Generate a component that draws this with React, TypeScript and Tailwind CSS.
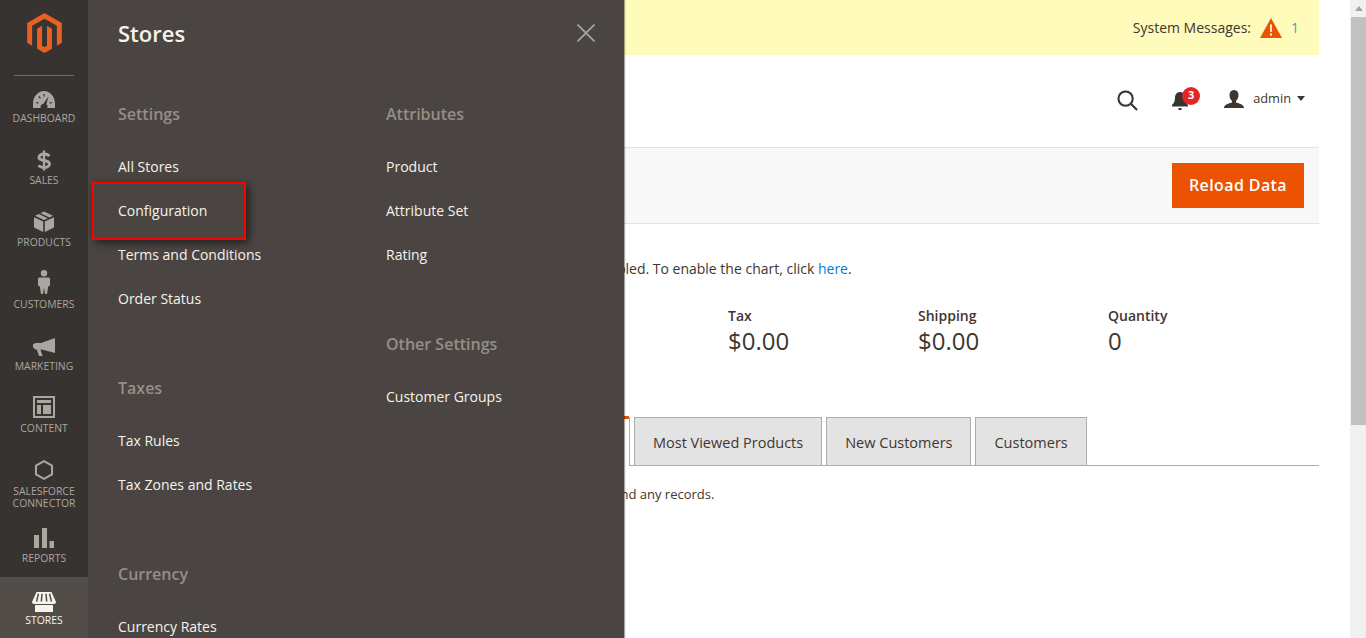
import type { ReactNode } from "react";

const navItems: { label: ReactNode; icon: ReactNode; tall?: boolean; active?: boolean }[] = [
  {
    label: "Dashboard",
    icon: (
      <svg width="22" height="17" viewBox="0 0 22 17" fill="#aaa6a0">
        <path d="M0 17V12.5C0 5.6 4.9 0 11 0s11 5.6 11 12.5V17H14.2c.9-1.6.3-3-.9-3.5L15.500 5.500 10.500 12.800C8.600 13 7 15 7.800 17H0z" />
        <path d="M3 11.500l2.400.7M5.800 5.500l1.600 1.800M11 3v2.400M19 11.500l-2.400.7" stroke="#373330" strokeWidth="1.300" />
      </svg>
    ),
  },
  {
    label: "Sales",
    icon: (
      <svg width="14" height="21" viewBox="0 0 14 21" fill="none" stroke="#aaa6a0" className="mb-[-1px]">
        <path strokeWidth="3" d="M12.500 6C11 4.500 9 4 7 4 4 4 2 5.500 2 7.500 2 12 12.500 9 12.500 14 12.500 16 10 17.500 7 17.500 5 17.500 3 17 1.500 15.500" />
        <path strokeWidth="2.400" d="M7 .5v20" />
      </svg>
    ),
  },
  {
    label: "Products",
    icon: (
      <svg width="20" height="21" viewBox="0 0 20 21" fill="#aaa6a0">
        <path d="M0 6.200 9.200 10.400V21L0 16.500z" />
        <path d="M20 6.200 10.800 10.400V21L20 16.500z" />
        <path d="M1 4.800 4.800 3 13.800 7.300 10 9.100z" />
        <path d="M6.500 2.200 10 .5 19 4.800 15.500 6.500z" />
      </svg>
    ),
  },
  {
    label: "Customers",
    icon: (
      <svg width="12" height="24" viewBox="0 0 12 24" fill="#aaa6a0">
        <circle cx="6" cy="3.300" r="3.200" />
        <path d="M1.500 7.500h9c.9 0 1.500.6 1.500 1.500v6.500l-1.800 1L9 24H7l-1-6.500L5 24H3l-1.200-7.500L0 15.500V9c0-.9.600-1.500 1.500-1.500z" />
      </svg>
    ),
  },
  {
    label: "Marketing",
    icon: (
      <svg width="22" height="18" viewBox="0 0 22 18" fill="#aaa6a0">
        <path d="M22 0v15L9 11.500H7.500L9.500 18H6L3.800 11.500H2.500L0 9.500V6.500L2.500 5H8z" />
      </svg>
    ),
  },
  {
    label: "Content",
    icon: (
      <svg width="22" height="22" viewBox="0 0 22 22" fill="#aaa6a0">
        <path fillRule="evenodd" d="M0 0h22v22H0zM2 2v18h18V2z" />
        <path d="M4 4h14v3H4zM4 9h4v9H4zM10 9h8v9h-8z" />
      </svg>
    ),
  },
  {
    label: (
      <>
        Salesforce
        <br />
        Connector
      </>
    ),
    tall: true,
    icon: (
      <svg width="18" height="20" viewBox="0 0 18 20" fill="none" stroke="#aaa6a0" strokeWidth="2">
        <path d="M9 1.200 17 5.600V14.400L9 18.800 1 14.400V5.600z" />
      </svg>
    ),
  },
  {
    label: "Reports",
    icon: (
      <svg width="20" height="20" viewBox="0 0 20 20" fill="#aaa6a0">
        <path d="M0 7h5v13H0zM8 0h5v20H8zM15.500 13H20v7h-4.500z" />
      </svg>
    ),
  },
  {
    label: "Stores",
    active: true,
    icon: (
      <svg width="24" height="20" viewBox="0 0 24 20" fill="#f7f3eb" className="mb-[-2px]">
        <path d="M4.500 0h15L24 10c0 1.200-1 2-2 2H2c-1 0-2-.8-2-2z" />
        <path d="M3 13h18v7H3z" />
        <path d="M6.500 1.800 4.500 9.500M10 1.800 9.300 9.500M14 1.800 14.700 9.500M17.500 1.800 19.500 9.500" stroke="#524d49" strokeWidth="1.500" />
      </svg>
    ),
  },
];

const menuColumns = [
  [
    { title: "Settings", links: ["All Stores", "Configuration", "Terms and Conditions", "Order Status"] },
    { title: "Taxes", links: ["Tax Rules", "Tax Zones and Rates"] },
    { title: "Currency", links: ["Currency Rates"] },
  ],
  [
    { title: "Attributes", links: ["Product", "Attribute Set", "Rating"] },
    { title: "Other Settings", links: ["Customer Groups"] },
  ],
];

const totals = [
  { label: "Revenue", value: "$0.00" },
  { label: "Tax", value: "$0.00" },
  { label: "Shipping", value: "$0.00" },
  { label: "Quantity", value: "0" },
];

function Sidebar() {
  return (
    <aside className="w-[88px] shrink-0 bg-[#373330]">
      <div className="relative h-[75px]">
        <svg width="35" height="40" viewBox="1.600 0 20.800 24" fill="#eb5f21" className="absolute left-[27px] top-[13px]">
          <path d="M12 24l-4.455-2.572v-12l2.97-1.715v12.001L12 20.57l1.485-.856V7.714l2.97 1.715v12L12 24zM22.391 6v12l-2.969 1.714V7.714L12 3.43 4.574 7.714v12L1.609 18V6L12 0l10.391 6z" />
        </svg>
        <div className="absolute -bottom-px left-[14px] h-px w-[60px] bg-[#736e6a]" />
      </div>
      {navItems.map((item, i) => (
        <div
          key={i}
          className={`flex flex-col items-center ${item.tall ? "h-[68px]" : "h-[62px]"} ${item.active ? "bg-[#524d49] text-[#f7f3eb]" : "text-[#aaa6a0]"}`}
        >
          <div className="flex h-[33px] items-end justify-center">{item.icon}</div>
          <div className={`${item.tall ? "mt-[5px]" : "mt-[4px]"} text-center text-[10.400px] leading-[12px] uppercase`}>{item.label}</div>
        </div>
      ))}
    </aside>
  );
}

function StoresPanel() {
  return (
    <div className="absolute top-0 bottom-0 left-[88px] w-[536px] bg-[#4a4542] pl-[30px] shadow-[1px_0_1px_rgba(0,0,0,0.35)]">
      <h1 className="mt-[17px] text-[22px] leading-[32px] font-semibold text-[#f7f3eb]">Stores</h1>
      <svg width="18" height="18" viewBox="0 0 18 18" stroke="#aaa6a0" strokeWidth="1.600" className="absolute top-[24px] left-[489px]">
        <path d="M.5.5l17 17M17.500.5l-17 17" />
      </svg>
      <div className="mt-[54px] flex">
        {menuColumns.map((groups, c) => (
          <div key={c} className="w-[268px] shrink-0">
            {groups.map((group) => (
              <div key={group.title} className="mb-[67px]">
                <h2 className="mb-[31px] text-[16px] leading-[22px] font-semibold text-[#978d86]">{group.title}</h2>
                <ul className="flex flex-col gap-[22px]">
                  {group.links.map((link) => (
                    <li key={link} className="text-[14px] leading-[22px] text-[#f7f3eb]">
                      {link}
                    </li>
                  ))}
                </ul>
              </div>
            ))}
          </div>
        ))}
      </div>
      {/* callout drawn on the screenshot */}
      <div className="absolute top-[182px] left-[4px] h-[58px] w-[154px] border-2 border-[#ff0000] shadow-[3px_3px_8px_rgba(0,0,0,0.55)]" />
    </div>
  );
}

function Main() {
  return (
    <main className="w-[1231px] shrink-0 text-[14px] text-[#41362f]">
      <div className="flex h-[55px] items-center justify-end bg-[#fffbbb] pr-[20px]">
        <span>System Messages:</span>
        <svg width="22" height="20" viewBox="0 0 22 20" className="mr-[9px] ml-[9px]">
          <path d="M11 0 22 20H0z" fill="#eb5202" />
          <path d="M10 6.500h2l-.3 7.500h-1.400zM10 15.500h2v2h-2z" fill="#fff" />
        </svg>
        <span className="text-[#5b8fc7]">1</span>
      </div>

      <header className="flex h-[93px] items-center justify-end border-b border-[#e3e3e3] pr-[14px] pb-[5px]">
        <svg width="21" height="21" viewBox="0 0 22 22" fill="none" stroke="#373330" strokeWidth="2.200" className="mt-[4px] mr-[34px]">
          <circle cx="9" cy="9" r="7.500" />
          <path d="M14.500 14.500 21 21" />
        </svg>
        <div className="relative mt-[4px] mr-[36px] h-[18px] w-[16px]">
          <svg width="16" height="18" viewBox="0 0 16 18" fill="#373330">
            <path d="M8 0c3.500 0 5 3 5 6 0 3 1 5 3 7v1.500H0V13c2-2 3-4 3-7 0-3 1.500-6 5-6z" />
            <path d="M6.500 16h3v2h-3z" />
          </svg>
          <span className="absolute top-[-5px] left-[10px] flex h-[18px] w-[18px] items-center justify-center rounded-full bg-[#e22626] text-[11px] font-bold text-white">3</span>
        </div>
        <svg width="20" height="18" viewBox="0 0 20 18" fill="#41362f" className="mr-[9px]">
          <path d="M10 0c3 0 4.500 2.200 4.500 5s-1.300 5-2.500 6v1.500c3 .8 8 2 8 5.500H0c0-3.500 5-4.700 8-5.500V11C6.800 10 5.500 7.800 5.500 5S7 0 10 0z" />
        </svg>
        <span className="text-[12.800px]">admin</span>
        <svg width="8" height="5" viewBox="0 0 8 5" fill="#41362f" className="ml-[6px]">
          <path d="M0 0h8L4 5z" />
        </svg>
      </header>

      <div className="flex h-[76px] items-center justify-end border-b border-[#e3e3e3] bg-[#f8f8f8] pr-[15px]">
        <button className="h-[45px] w-[132px] bg-[#eb5202] pb-[2px] text-[16px] font-semibold tracking-[0.4px] text-white">Reload Data</button>
      </div>

      <p className="mt-[35px] pl-[449px] leading-[20px]">
        Chart is disabled. To enable the chart, click <a className="text-[#007bdb]">here</a>.
      </p>

      <div className="mt-[28px] flex pl-[450px]">
        {totals.map((t) => (
          <div key={t.label} className="w-[190px] shrink-0">
            <div className="text-[14px] leading-[18px] font-semibold">{t.label}</div>
            <div className="text-[24px] leading-[32px]">{t.value}</div>
          </div>
        ))}
      </div>

      <div className="mt-[60px] flex h-[49px] gap-[4px] border-b border-[#adadad] pl-[431px] text-[14.500px]">
        <div className="relative h-[49px] border-x border-[#adadad] bg-white px-[18px] pt-[15px] leading-[20px]">
          <div className="absolute -top-px right-0 left-0 h-[3px] bg-[#eb5202]" />
          Bestsellers
        </div>
        {["Most Viewed Products", "New Customers", "Customers"].map((tab) => (
          <div key={tab} className="h-[48px] border border-b-0 border-[#adadad] bg-[#e3e3e3] px-[18px] pt-[15px] leading-[20px]">
            {tab}
          </div>
        ))}
      </div>

      <p className="mt-[19px] pl-[450px] text-[13px] leading-[18px]">We couldn't find any records.</p>
    </main>
  );
}

export default function App() {
  return (
    <div className="relative flex h-[638px] w-[1366px] overflow-hidden bg-white font-['Open_Sans',sans-serif]">
      <Sidebar />
      <Main />
      <div className="ml-[31px] flex w-[16px] flex-col bg-[#f1f1f1] pl-px">
        <div className="flex h-[17px] items-center justify-center">
          <svg width="8" height="5" viewBox="0 0 8 5" fill="#a3a3a3">
            <path d="M4 0l4 5H0z" />
          </svg>
        </div>
        <div className="h-[408px] bg-[#c1c1c1]" />
      </div>
      <StoresPanel />
    </div>
  );
}
